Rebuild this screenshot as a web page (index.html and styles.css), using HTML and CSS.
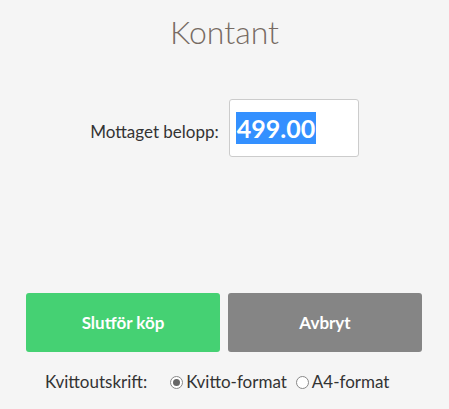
FILE: index.html
```html
<!DOCTYPE html>
<html>
<head>
<meta charset="utf-8">
<link rel="stylesheet" href="styles.css">
</head>
<body>
<div class="page">
  <h1 class="title">Kontant</h1>
  <div class="amount-row">
    <label class="amount-label">Mottaget belopp:</label>
    <div class="amount-input"><span class="selected">499.00</span></div>
  </div>
  <div class="buttons">
    <button class="btn btn-primary">Slutför köp</button>
    <button class="btn btn-cancel">Avbryt</button>
  </div>
  <div class="print-row">
    <span class="print-label">Kvittoutskrift:</span>
    <span class="radio checked"></span><span class="opt">Kvitto-format</span>
    <span class="radio"></span><span class="opt">A4-format</span>
  </div>
</div>
</body>
</html>
```
FILE: styles.css
```css
html, body {
  margin: 0;
  padding: 0;
  background: #f5f5f5;
}
body {
  font-family: Lato, "Liberation Sans", sans-serif;
  color: #333;
}
.page {
  width: 449px;
  height: 409px;
  display: flex;
  flex-direction: column;
}
.title {
  margin: 0;
  padding-top: 12px;
  text-align: center;
  font-size: 32px;
  line-height: 40px;
  font-weight: 300;
  color: #776b63;
}
.amount-row {
  margin-top: 47px;
  display: flex;
  align-items: center;
  justify-content: center;
  gap: 10px;
}
.amount-label {
  font-size: 17px;
  padding-top: 6px;
}
.amount-input {
  width: 121px;
  height: 56px;
  border: 1px solid #ccc;
  border-radius: 3px;
  background: #fff;
  display: flex;
  align-items: center;
  padding-left: 6px;
  padding-right: 1px;
}
.selected {
  background: #3390ff;
  color: #fff;
  font-weight: 700;
  font-size: 25px;
  line-height: 32px;
  padding: 0 1px;
}
.buttons {
  margin-top: 136px;
  display: flex;
  gap: 8px;
  padding: 0 27px 0 26px;
}
.btn {
  flex: 1;
  height: 59px;
  border: none;
  border-radius: 3px;
  font-family: inherit;
  font-size: 17px;
  font-weight: 700;
  color: #fff;
}
.btn-primary { background: #45d173; }
.btn-cancel { background: #858585; }
.print-row {
  margin-top: 20px;
  display: flex;
  align-items: center;
  padding-left: 45px;
  font-size: 17px;
  line-height: 20px;
}
.print-label {
  margin-right: 23px;
}
.radio {
  width: 11px;
  height: 11px;
  border: 1px solid #888;
  border-radius: 50%;
  background: #fff;
  margin-right: 3px;
  position: relative;
}
.radio.checked::after {
  content: "";
  position: absolute;
  left: 2px;
  top: 2px;
  width: 7px;
  height: 7px;
  border-radius: 50%;
  background: #666;
}
.opt { margin-right: 9px; }
```
